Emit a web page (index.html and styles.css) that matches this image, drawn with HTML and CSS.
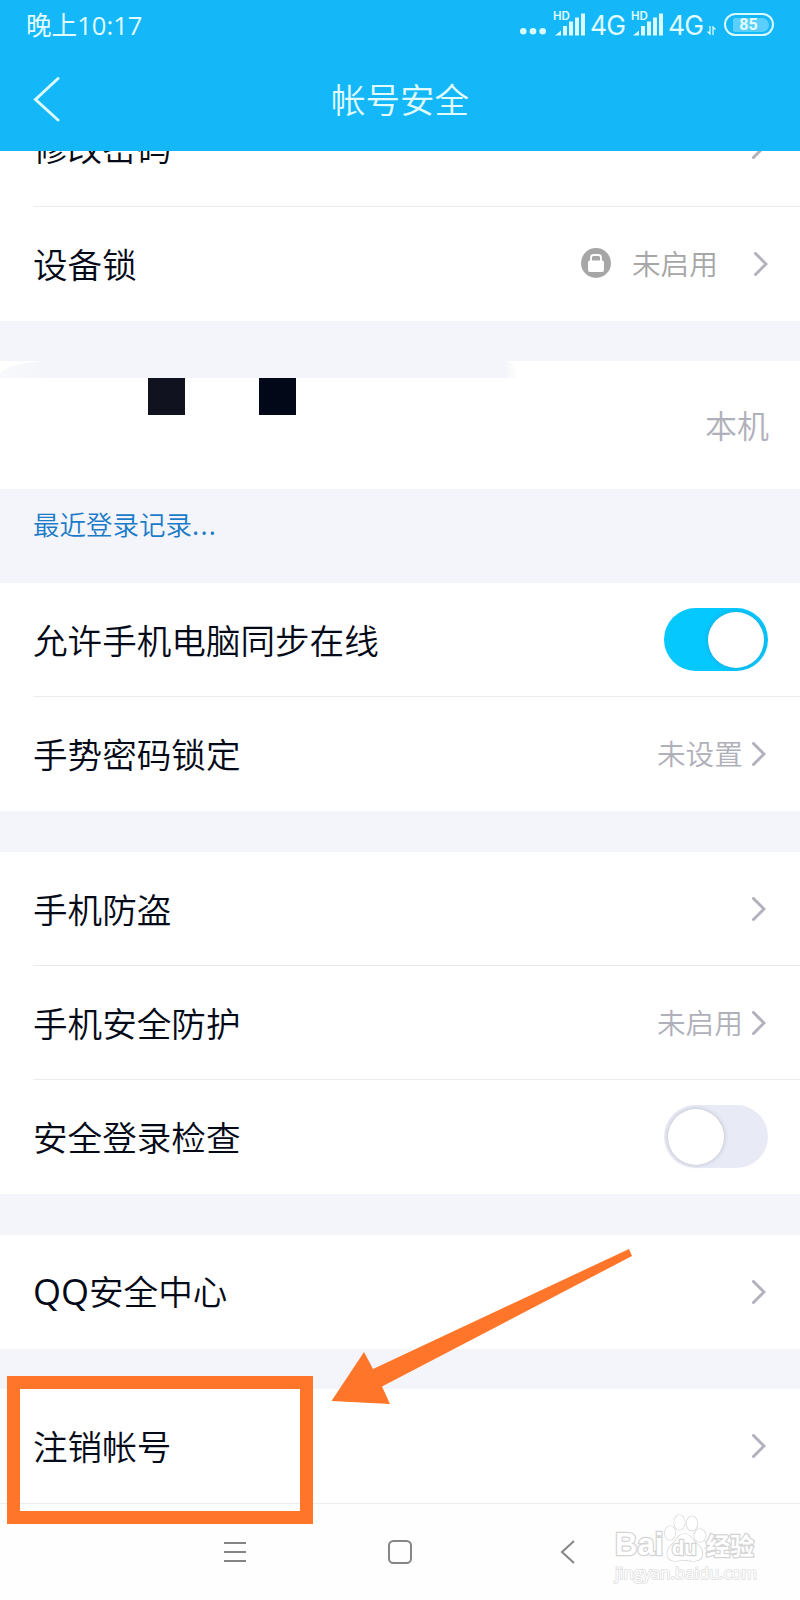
FILE: index.html
```html
<!DOCTYPE html>
<html lang="zh-CN">
<head>
  <meta charset="UTF-8">
  <title>帐号安全</title>
  <meta name="viewport" content="width=device-width, initial-scale=1.0">
  <link rel="stylesheet" href="styles.css">
</head>
<body>

<div class="screen">
  <header class="header">
    <div class="status-bar">
      <span class="time">晚上10:17</span>
      <div class="status-icons">
        <svg class="dots" width="26" height="36" viewBox="0 0 26 36"><circle cx="3.2" cy="31.3" r="3.3"/><circle cx="13" cy="31.3" r="3.3"/><circle cx="22.7" cy="31.3" r="3.3"/></svg>
        <span class="signal">
          <span class="hd">HD</span>
          <svg width="30" height="23" viewBox="0 0 30 23"><path d="M0 22.500l6-5v5zM8 13h4v9.500h-4zM14 8.500h4v14h-4zM20 4.500h4v18h-4zM26 .5h4v22h-4z"/></svg>
        </span>
        <span class="net">4G</span>
        <span class="signal second">
          <span class="hd">HD</span>
          <svg width="30" height="23" viewBox="0 0 30 23"><path d="M0 22.500l6-5v5zM8 13h4v9.500h-4zM14 8.500h4v14h-4zM20 4.500h4v18h-4zM26 .5h4v22h-4z"/></svg>
        </span>
        <span class="net">4G</span>
        <svg class="transfer" width="9" height="9" viewBox="0 0 9 9"><path d="M3 0v8L.5 5.500M6 9V1l2.500 2.500"/></svg>
        <span class="battery"><span class="level">85</span></span>
      </div>
    </div>
    <div class="title-bar">
      <svg class="back" width="28" height="46" viewBox="0 0 28 46"><path d="M25 2.500L2.500 23.500l22.500 20.500"/></svg>
      <h1>帐号安全</h1>
    </div>
  </header>

  <main class="list">
    <div class="group first">
      <div class="row clipped">
        <span class="label">修改密码</span>
        <svg class="chevron" width="14" height="24" viewBox="0 0 14 24"><path d="M1.500 1.500L12 12 1.500 22.500"/></svg>
      </div>
      <div class="row device">
        <span class="label">设备锁</span>
        <svg class="lock" width="30" height="30" viewBox="0 0 30 30"><circle cx="15" cy="15" r="15" fill="#a6a6a6"/><rect x="7" y="12.500" width="16" height="11.500" rx="2" fill="#fff"/><path d="M10 13V9.500q0-2.500 2.500-2.500h5q2.500 0 2.500 2.500V13" fill="none" stroke="#fff" stroke-width="1.800"/></svg>
        <span class="value">未启用</span>
        <svg class="chevron" width="14" height="24" viewBox="0 0 14 24"><path d="M1.500 1.500L12 12 1.500 22.500"/></svg>
      </div>
    </div>

    <div class="group current">
      <div class="shade"></div>
      <div class="blocks"><i></i><i></i></div>
      <span class="value">本机</span>
    </div>

    <a class="history">最近登录记录<span class="more">...</span></a>

    <div class="group">
      <div class="row">
        <span class="label">允许手机电脑同步在线</span>
        <span class="toggle on"></span>
      </div>
      <div class="row">
        <span class="label">手势密码锁定</span>
        <span class="value">未设置</span>
        <svg class="chevron" width="14" height="24" viewBox="0 0 14 24"><path d="M1.500 1.500L12 12 1.500 22.500"/></svg>
      </div>
    </div>

    <div class="group">
      <div class="row">
        <span class="label">手机防盗</span>
        <svg class="chevron" width="14" height="24" viewBox="0 0 14 24"><path d="M1.500 1.500L12 12 1.500 22.500"/></svg>
      </div>
      <div class="row">
        <span class="label">手机安全防护</span>
        <span class="value">未启用</span>
        <svg class="chevron" width="14" height="24" viewBox="0 0 14 24"><path d="M1.500 1.500L12 12 1.500 22.500"/></svg>
      </div>
      <div class="row">
        <span class="label">安全登录检查</span>
        <span class="toggle"></span>
      </div>
    </div>

    <div class="group center">
      <div class="row">
        <span class="label"><span class="latin">QQ</span>安全中心</span>
        <svg class="chevron" width="14" height="24" viewBox="0 0 14 24"><path d="M1.500 1.500L12 12 1.500 22.500"/></svg>
      </div>
    </div>

    <div class="group">
      <div class="row">
        <span class="label">注销帐号</span>
        <svg class="chevron" width="14" height="24" viewBox="0 0 14 24"><path d="M1.500 1.500L12 12 1.500 22.500"/></svg>
      </div>
    </div>
  </main>

  <nav class="nav-bar">
    <svg width="24" height="24" viewBox="0 0 24 24"><path d="M1 3h22M1 12h22M1 21h22"/></svg>
    <svg width="24" height="24" viewBox="0 0 24 24"><rect x="1" y="1" width="22" height="22" rx="4.500"/></svg>
    <svg width="24" height="24" viewBox="0 0 24 24"><path d="M21 1L9 12l12 11"/></svg>
  </nav>

  <!-- marks over the list -->
  <div class="highlight"></div>
  <svg class="arrow" width="302" height="156" viewBox="0 0 302 156"><path d="M.5 153L33 104l9 17L298 1l3 7L51 138.500l8 17.500z"/></svg>

  <div class="watermark">
    <div class="brand">
      <span class="bai">Bai</span>
      <span class="paw">
        <svg width="44" height="48" viewBox="0 0 44 48">
          <ellipse cx="6" cy="19" rx="5.300" ry="7"/>
          <ellipse cx="15.500" cy="8.500" rx="5.300" ry="7.500"/>
          <ellipse cx="28" cy="9.500" rx="5.500" ry="7.200"/>
          <ellipse cx="36" cy="21.500" rx="5.800" ry="6.500"/>
          <path d="M20.500 20C27.500 20 28.500 27 33.500 30.500C40.500 36 40.500 46.500 30.500 47C25.500 47 23.500 46 20.500 46S14.500 47 10.500 47C1.500 46.500 1.500 36 7.500 31C13.500 26 13.500 20 20.500 20z"/>
        </svg>
        <span class="du">du</span>
      </span>
      <span class="jingyan">经验</span>
    </div>
    <div class="site">jingyan.baidu.com</div>
  </div>
</div>

</body>
</html>
```
FILE: styles.css
```css
body {
  margin: 0;
  background: #f4f5fa;
  font-family: 'Noto Sans CJK SC', sans-serif;
  font-weight: 350;
  color: #050a18;
}
.screen {
  position: relative;
  width: 800px;
  height: 1600px;
  overflow: hidden;
}

/* header */
.header {
  position: relative;
  z-index: 1;
  height: 151px;
  background: #14b7f7;
  color: #e0fcff;
}
.status-bar {
  display: flex;
  justify-content: space-between;
  height: 50px;
  padding: 0 26px;
}
.time {
  font-family: 'Open Sans', 'Noto Sans CJK SC', sans-serif;
  font-size: 25.6px;
  font-weight: 400;
  line-height: 52px;
}
.status-icons {
  display: flex;
  align-items: flex-start;
  height: 50px;
  fill: #d9fbff;
}
.status-icons .dots {
  margin-right: 9px;
}
.signal {
  position: relative;
  width: 30px;
  padding-top: 12.5px;
  height: 23px;
}
.signal svg {
  display: block;
}
.hd {
  position: absolute;
  left: -2px;
  top: 11px;
  font: 600 11.5px/11px Inter, sans-serif;
}
.net {
  width: 36px;
  margin-left: 5px;
  margin-right: 1px;
  font: 400 26.5px/51px Inter, sans-serif;
  letter-spacing: -0.8px;
}
.signal.second {
  margin-left: 6px;
}
.transfer {
  margin: 26px 8px 0 2px;
  fill: none;
  stroke: #d9fbff;
  stroke-width: 1.3;
}
.battery {
  box-sizing: border-box;
  width: 50px;
  height: 23px;
  margin-top: 13px;
  padding: 3px;
  border: 2px solid #d9fbff;
  border-radius: 12px;
}
.level {
  display: block;
  width: 36px;
  margin-left: 4px;
  border-radius: 2px 7px 7px 2px;
  background: #5bcffb;
  font: 700 16px/14px Roboto, sans-serif;
  text-align: center;
  text-indent: -5px;
}
.title-bar {
  display: flex;
  align-items: center;
  height: 101px;
  padding: 0 33px;
}
.title-bar .back {
  margin-top: -3px;
  fill: none;
  stroke: #d9fbff;
  stroke-width: 3;
  stroke-linecap: round;
}
.title-bar h1 {
  flex: 1;
  margin: -5px 28px 0 0;
  font-size: 34.5px;
  font-weight: 350;
  line-height: 100px;
  text-align: center;
}

/* settings list */
.list {
  display: flex;
  flex-direction: column;
}
.group {
  background: #fff;
  margin-bottom: 41px;
}
.group.first {
  margin-top: -58px;
  margin-bottom: 40px;
}
.row {
  display: flex;
  align-items: center;
  box-sizing: border-box;
  height: 114px;
  margin-left: 33px;
  padding-right: 34px;
  border-bottom: 1px solid #ebebee;
}
.row:last-child {
  border-bottom-color: transparent;
}
.row.clipped {
  padding-bottom: 6px;
}
.group.center {
  margin-bottom: 40px;
}
.label {
  flex: 1;
  margin-top: -2px;
  font-size: 34.6px;
  line-height: 50px;
}
.latin {
  font-family: 'Open Sans', sans-serif;
  font-size: 36px;
  font-weight: 400;
}
.value {
  margin-top: -2px;
  font-size: 28.7px;
  color: #b0b0ba;
}
.chevron {
  fill: none;
  stroke: #b2b2be;
  stroke-width: 3;
  stroke-linecap: round;
}
.value + .chevron {
  margin-left: 9px;
}
.device {
  padding-right: 32px;
}
.device .value {
  margin-left: 21px;
  color: #a6a6a6;
}
.device .lock {
  margin-top: -1px;
}
.device .chevron {
  margin-left: 36px;
}
.group.current {
  display: flex;
  flex-wrap: wrap;
  justify-content: space-between;
  align-content: flex-start;
  height: 128px;
  margin-bottom: 0;
  padding-right: 31px;
}
.shade {
  width: 518px;
  height: 17px;
  margin-right: 200px;
  border-radius: 50px 12px 0 0 / 15px 17px 0 0;
  background: linear-gradient(90deg, #f8f9fc, #f4f5fa 50px, #f4f5fa 505px, #fff);
}
.blocks {
  display: flex;
  gap: 74px;
  margin-left: 148px;
}
.blocks i {
  width: 37px;
  height: 37px;
  background: #10131f;
}
.blocks i + i {
  background: #020817;
}
.current .value {
  margin-top: 22px;
  font-size: 32px;
  line-height: 48px;
}
.history {
  height: 94px;
  padding-left: 33px;
  color: #1c7bc9;
  font-size: 26.5px;
  line-height: 70px;
}
.history .more {
  letter-spacing: 1.3px;
}

.toggle {
  box-sizing: border-box;
  width: 104px;
  height: 63px;
  margin-right: -2px;
  padding: 3.5px 4px;
  border-radius: 32px;
  background: #e8ebf5;
}
.toggle::before {
  content: "";
  display: block;
  width: 56px;
  height: 56px;
  border-radius: 50%;
  background: #fff;
  box-shadow: 0 0 4px rgba(90, 90, 110, 0.35);
}
.toggle.on {
  background: #05c8ff;
}
.toggle.on::before {
  margin-left: auto;
}

/* system navigation */
.nav-bar {
  position: absolute;
  left: 0;
  right: 0;
  bottom: 0;
  display: flex;
  justify-content: center;
  gap: 141px;
  box-sizing: border-box;
  height: 97px;
  padding-top: 36px;
  border-top: 1px solid #ededf0;
  background: #fefefe;
  fill: none;
  stroke: #858585;
  stroke-width: 2;
}

.highlight {
  position: absolute;
  left: 7px;
  top: 1376px;
  width: 280px;
  height: 122px;
  border: 13px solid #ff7529;
}
.arrow {
  position: absolute;
  left: 331px;
  top: 1248px;
  fill: #ff7529;
}

/* watermark */
.watermark {
  position: absolute;
  left: 615px;
  top: 1514px;
  width: 146px;
  color: #fff;
}
.brand {
  display: flex;
  height: 48px;
  -webkit-text-stroke: 2.5px #d4d4d4;
  paint-order: stroke fill;
}
.bai {
  width: 49px;
  font: 700 31px/62px 'Liberation Sans', sans-serif;
}
.paw {
  position: relative;
  width: 42px;
  fill: #fff;
  stroke: #cfcfcf;
  stroke-width: 1.2;
}
.du {
  position: absolute;
  left: 8px;
  top: 22px;
  font: 700 20px/24px 'Liberation Sans', sans-serif;
}
.jingyan {
  font-size: 24px;
  font-weight: 700;
  line-height: 62px;
}
.site {
  font: 400 16.7px/22px 'Open Sans', sans-serif;
  -webkit-text-stroke: 1.6px #dedede;
  paint-order: stroke fill;
}
```
